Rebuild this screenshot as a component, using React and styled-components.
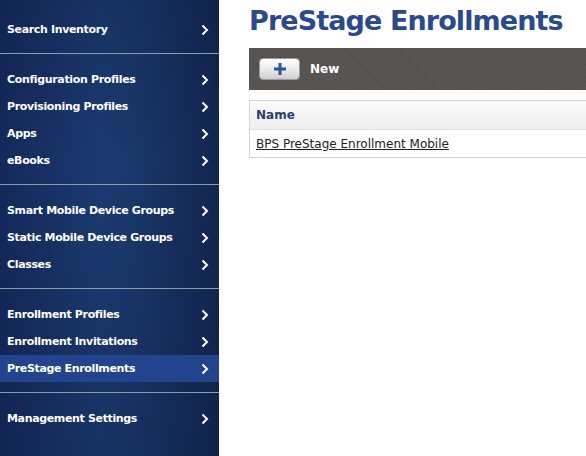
import React from "react";
import styled, { createGlobalStyle } from "styled-components";

const GlobalStyle = createGlobalStyle`
  html, body {
    margin: 0;
    padding: 0;
    height: 100%;
    background: #ffffff;
  }
  body {
    font-family: "DejaVu Sans", "Liberation Sans", sans-serif;
  }
`;

const Page = styled.div`
  display: flex;
  width: 586px;
  height: 456px;
  overflow: hidden;
`;

const Sidebar = styled.nav`
  width: 219px;
  flex-shrink: 0;
  height: 100%;
  padding-top: 5px;
  box-sizing: border-box;
  background:
    linear-gradient(180deg, rgba(8, 20, 48, 0.2) 0%, rgba(8, 20, 48, 0) 35%, rgba(8, 20, 48, 0.2) 100%),
    linear-gradient(90deg, #14295a 0%, #1b3a70 45%, #1a386c 60%, #12264f 100%);
`;

const Group = styled.div`
  padding: 12px 0 10px;
  border-bottom: ${p => (p.last ? "none" : "1px solid #8f9ab0")};
  &:first-child {
    padding-top: 11px;
  }
`;

const Item = styled.a`
  display: flex;
  align-items: center;
  justify-content: space-between;
  height: 27px;
  padding: 0 10px 0 7px;
  color: #ffffff;
  font-size: 11px;
  font-weight: bold;
  letter-spacing: -0.35px;
  text-decoration: none;
  background: ${p => (p.active ? "#22448c" : "transparent")};
  cursor: pointer;
`;

const Chevron = () => (
  <svg width="8" height="12" viewBox="0 0 8 12">
    <polyline points="1.5,1.5 6,6 1.5,10.5" fill="none" stroke="#ffffff" strokeWidth="2" />
  </svg>
);

const Main = styled.main`
  flex: 1;
  min-width: 0;
  overflow: hidden;
  padding-left: 30px;
`;

const Content = styled.div`
  width: 400px;
`;

const Title = styled.h1`
  margin: 0;
  padding-top: 4px;
  font-size: 27px;
  letter-spacing: -0.9px;
  line-height: 34px;
  font-weight: bold;
  color: #2a4a8c;
  white-space: nowrap;
`;

const Toolbar = styled.div`
  margin-top: 10px;
  height: 42px;
  display: flex;
  align-items: center;
  gap: 10px;
  padding-left: 10px;
  background-color: #5a5654;
  background-image: repeating-linear-gradient(
    45deg,
    rgba(0, 0, 0, 0.08) 0px,
    rgba(0, 0, 0, 0.08) 1px,
    rgba(255, 255, 255, 0) 1px,
    rgba(255, 255, 255, 0) 3px
  );
`;

const AddButton = styled.button`
  width: 41px;
  height: 22px;
  border: 1px solid #9a9a9a;
  border-radius: 4px;
  background: linear-gradient(180deg, #ffffff 0%, #ececec 50%, #cfcfcf 100%);
  display: flex;
  align-items: center;
  justify-content: center;
  padding: 0;
  cursor: pointer;
`;

const ToolbarLabel = styled.span`
  color: #ffffff;
  font-size: 12px;
  font-weight: bold;
`;

const Table = styled.div`
  margin-top: 10px;
  border: 1px solid #d4d4d4;
  border-right: none;
`;

const HeadRow = styled.div`
  height: 28px;
  display: flex;
  align-items: center;
  padding-left: 6px;
  background: linear-gradient(180deg, #fbfbfb 0%, #eeeeee 100%);
  border-bottom: 1px solid #e2e2e2;
  color: #2b3e72;
  font-size: 12px;
  font-weight: bold;
`;

const Row = styled.div`
  height: 27px;
  display: flex;
  align-items: center;
  padding-left: 6px;
  background: #ffffff;
`;

const RowLink = styled.a`
  color: #222222;
  font-size: 12px;
  text-decoration: underline;
  cursor: pointer;
`;

const groups = [
  [{ label: "Search Inventory" }],
  [
    { label: "Configuration Profiles" },
    { label: "Provisioning Profiles" },
    { label: "Apps" },
    { label: "eBooks" },
  ],
  [
    { label: "Smart Mobile Device Groups" },
    { label: "Static Mobile Device Groups" },
    { label: "Classes" },
  ],
  [
    { label: "Enrollment Profiles" },
    { label: "Enrollment Invitations" },
    { label: "PreStage Enrollments", active: true },
  ],
  [{ label: "Management Settings" }],
];

export default function App() {
  return (
    <>
      <GlobalStyle />
      <Page>
        <Sidebar>
          {groups.map((items, gi) => (
            <Group key={gi} last={gi === groups.length - 1}>
              {items.map(item => (
                <Item key={item.label} active={item.active}>
                  {item.label}
                  <Chevron />
                </Item>
              ))}
            </Group>
          ))}
        </Sidebar>
        <Main>
          <Content>
            <Title>PreStage Enrollments</Title>
            <Toolbar>
              <AddButton aria-label="New">
                <svg width="14" height="14" viewBox="0 0 14 14">
                  <path d="M7 1v12M1 7h12" stroke="#2d5597" strokeWidth="3" />
                </svg>
              </AddButton>
              <ToolbarLabel>New</ToolbarLabel>
            </Toolbar>
            <Table>
              <HeadRow>Name</HeadRow>
              <Row>
                <RowLink>BPS PreStage Enrollment Mobile</RowLink>
              </Row>
            </Table>
          </Content>
        </Main>
      </Page>
    </>
  );
}
